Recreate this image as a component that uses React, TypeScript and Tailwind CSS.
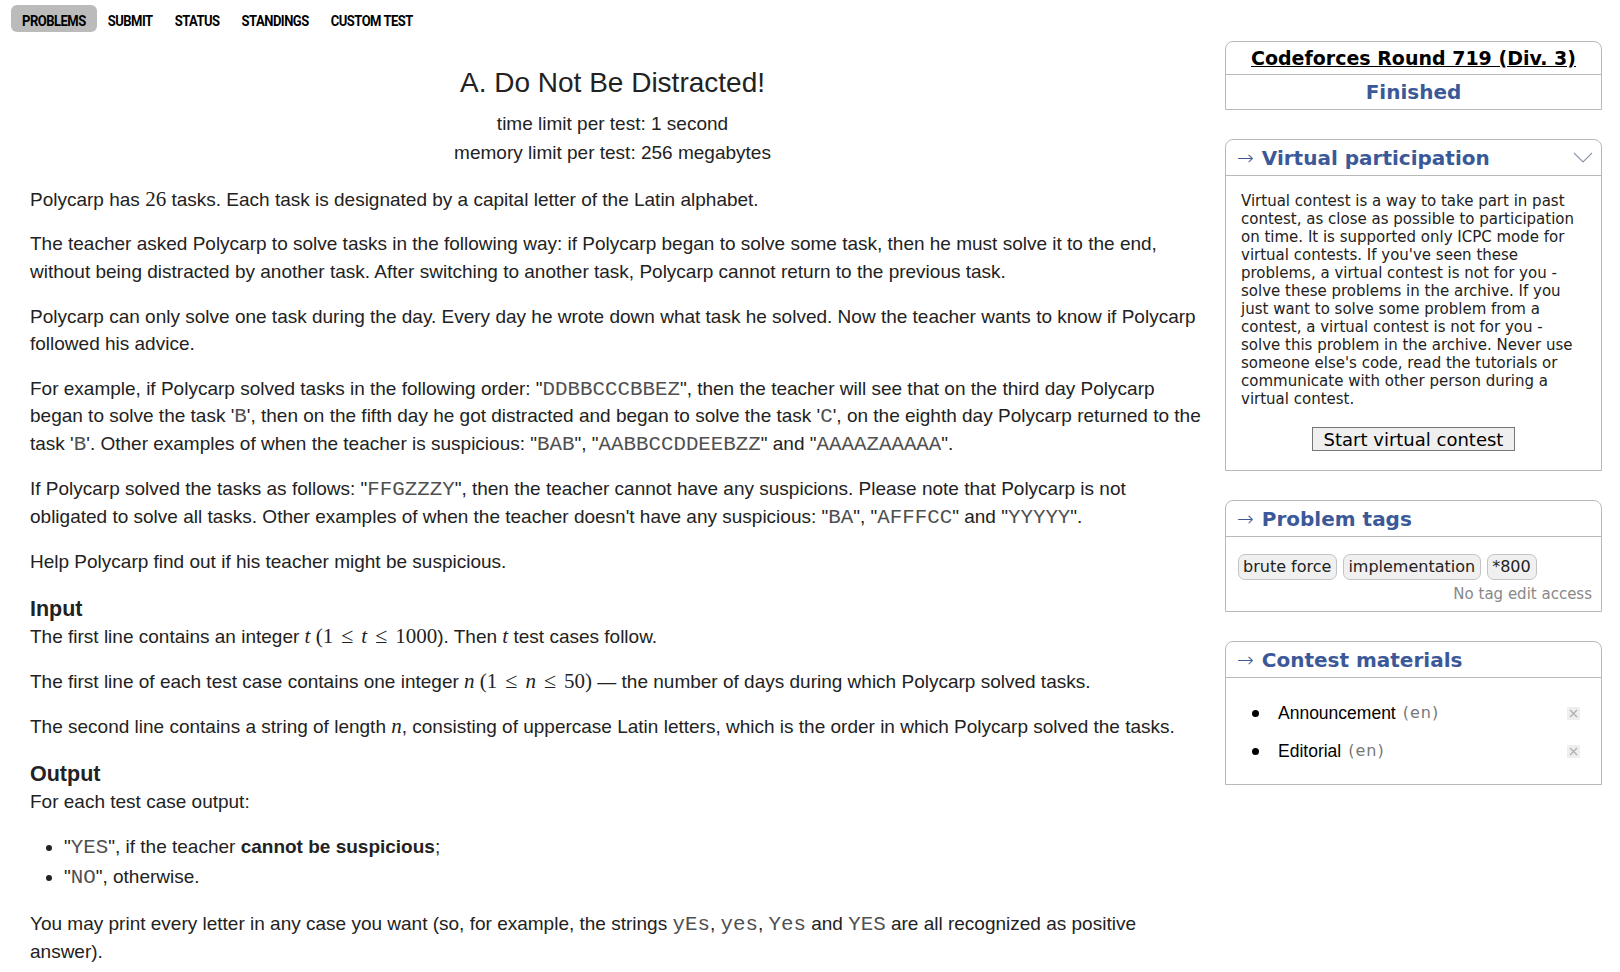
import React from "react";

const sans = { fontFamily: '"Liberation Sans", Arial, sans-serif' };
const serif = { fontFamily: '"Liberation Serif", "Times New Roman", serif' };

function M({ children, i }: { children: React.ReactNode; i?: boolean }) {
  return (
    <span className={"text-[21px] leading-none " + (i ? "italic" : "")} style={serif}>
      {children}
    </span>
  );
}

function Le() {
  return (
    <span className="text-[22px] leading-none mx-[8px]" style={serif}>
      ≤
    </span>
  );
}

function T({ children }: { children: React.ReactNode }) {
  return (
    <span
      className="text-[20.8px] leading-none text-[#505050]"
      style={{ fontFamily: '"Liberation Mono", "Courier New", monospace' }}
    >
      {children}
    </span>
  );
}

function BoxHeader({ title, chevron }: { title: string; chevron?: boolean }) {
  return (
    <div className="h-[36px] flex items-center border-b border-[#b9b9b9] pl-[11px] pr-[8px] text-[#3B5998]">
      <span className="text-[20px] font-extralight">→</span>
      <span className="text-[20px] font-bold ml-[8px]">{title}</span>
      {chevron && (
        <svg className="ml-auto" width="20" height="11" viewBox="0 0 20 11">
          <polyline points="1,1 10,10 19,1" fill="none" stroke="#8a96ad" strokeWidth="1.1" />
        </svg>
      )}
    </div>
  );
}

export default function App() {
  const menu = ["PROBLEMS", "SUBMIT", "STATUS", "STANDINGS", "CUSTOM TEST"];
  return (
    <div
      className="w-[1620px] h-[972px] bg-white overflow-hidden text-[#222]"
      style={{ fontFamily: '"DejaVu Sans", Verdana, sans-serif' }}
    >
      <div className="flex items-start h-[37px] pl-[11px] pt-[5px]">
        {menu.map((m, i) => (
          <div
            key={m}
            className={
              "h-[27px] px-[11px] pt-[4px] flex items-center rounded-[6px] text-[13px] font-bold text-black tracking-[-0.5px] " +
              (i === 0 ? "bg-[#bbbbbb]" : "")
            }
            style={{ fontFamily: 'Roboto, "Liberation Sans", sans-serif' }}
          >
            <span className="inline-block scale-y-[1.15]">{m}</span>
          </div>
        ))}
      </div>

      <div className="flex">
        <div className="w-[1225px] pl-[30px] pr-[20px] text-[19px] leading-[27.5px]" style={sans}>
          <div className="pr-[10px] text-center">
            <div className="mt-[29px] text-[28px] leading-[34px]">A. Do Not Be Distracted!</div>
            <div className="mt-[9px] leading-[29px]">time limit per test: 1 second</div>
            <div className="leading-[29px]">memory limit per test: 256 megabytes</div>
          </div>

          <p className="mt-[18.5px] mb-[17px]">
            Polycarp has <M>26</M> tasks. Each task is designated by a capital letter of the Latin alphabet.
          </p>
          <p className="mb-[17.5px]">
            The teacher asked Polycarp to solve tasks in the following way: if Polycarp began to solve some task, then
            he must solve it to the end, without being distracted by another task. After switching to another task,
            Polycarp cannot return to the previous task.
          </p>
          <p className="mb-[17px]">
            Polycarp can only solve one task during the day. Every day he wrote down what task he solved. Now the
            teacher wants to know if Polycarp followed his advice.
          </p>
          <p className="mb-[18px]">
            For example, if Polycarp solved tasks in the following order: "<T>DDBBCCCBBEZ</T>", then the teacher will
            see that on the third day Polycarp began to solve the task '<T>B</T>', then on the fifth day he got
            distracted and began to solve the task '<T>C</T>', on the eighth day Polycarp returned to the task '
            <T>B</T>'. Other examples of when the teacher is suspicious: "<T>BAB</T>", "<T>AABBCCDDEEBZZ</T>" and "
            <T>AAAAZAAAAA</T>".
          </p>
          <p className="mb-[18px]">
            If Polycarp solved the tasks as follows: "<T>FFGZZZY</T>", then the teacher cannot have any suspicions.
            Please note that Polycarp is not obligated to solve all tasks. Other examples of when the teacher doesn't
            have any suspicious: "<T>BA</T>", "<T>AFFFCC</T>" and "<T>YYYYY</T>".
          </p>
          <p className="mb-[20.5px]">Help Polycarp find out if his teacher might be suspicious.</p>

          <div className="text-[21.5px] font-bold leading-[27px]">Input</div>
          <p className="mb-[17px]">
            The first line contains an integer <M i>t</M> <M>(1</M>
            <Le />
            <M i>t</M>
            <Le />
            <M>1000</M>). Then <M i>t</M> test cases follow.
          </p>
          <p className="mb-[17.5px]">
            The first line of each test case contains one integer <M i>n</M> <M>(1</M>
            <Le />
            <M i>n</M>
            <Le />
            <M>50)</M> — the number of days during which Polycarp solved tasks.
          </p>
          <p className="mb-[20.5px]">
            The second line contains a string of length <M i>n</M>, consisting of uppercase Latin letters, which is
            the order in which Polycarp solved the tasks.
          </p>

          <div className="text-[21.5px] font-bold leading-[27px]">Output</div>
          <p className="mb-[17px]">For each test case output:</p>
          <ul className="list-disc pl-[34px] mb-[18px] leading-[30px]">
            <li>
              "<T>YES</T>", if the teacher <b>cannot be suspicious</b>;
            </li>
            <li>
              "<T>NO</T>", otherwise.
            </li>
          </ul>
          <p>
            You may print every letter in any case you want (so, for example, the strings <T>yEs</T>, <T>yes</T>,{" "}
            <T>Yes</T> and <T>YES</T> are all recognized as positive answer).
          </p>
        </div>

        <div className="w-[377px] mt-[4px]">
          <div className="border border-[#b9b9b9] rounded-t-[8px]">
            <div className="h-[33px] flex items-center justify-center border-b border-[#b9b9b9]">
              <span className="text-[19px] font-bold text-black underline">Codeforces Round 719 (Div. 3)</span>
            </div>
            <div className="h-[34px] flex items-center justify-center text-[#3B5998] font-bold text-[20px]">
              Finished
            </div>
          </div>

          <div className="mt-[29px] border border-[#b9b9b9] rounded-t-[8px]">
            <BoxHeader title="Virtual participation" chevron />
            <div className="px-[15px] pt-[16px] pb-[19px]">
              <div className="text-[15px] leading-[18px] text-[#222] whitespace-nowrap">
                Virtual contest is a way to take part in past
                <br />
                contest, as close as possible to participation
                <br />
                on time. It is supported only ICPC mode for
                <br />
                virtual contests. If you've seen these
                <br />
                problems, a virtual contest is not for you -
                <br />
                solve these problems in the archive. If you
                <br />
                just want to solve some problem from a
                <br />
                contest, a virtual contest is not for you -
                <br />
                solve this problem in the archive. Never use
                <br />
                someone else's code, read the tutorials or
                <br />
                communicate with other person during a
                <br />
                virtual contest.
              </div>
              <div className="flex justify-center mt-[19px]">
                <div className="h-[24px] w-[203px] flex items-center justify-center border border-[#767676] bg-[#efefef] text-[18px] text-black">
                  Start virtual contest
                </div>
              </div>
            </div>
          </div>

          <div className="mt-[29px] border border-[#b9b9b9] rounded-t-[8px]">
            <BoxHeader title="Problem tags" />
            <div className="pl-[12px] pr-[9px] pt-[17px] pb-[8px]">
              <div className="flex gap-[6px]">
                {["brute force", "implementation", "*800"].map((t) => (
                  <span
                    key={t}
                    className="h-[26px] flex items-center pl-[4px] pr-[5px] border border-[#c4c4c4] bg-[#f0f0f0] rounded-[7px] text-[16px] text-[#222]"
                  >
                    {t}
                  </span>
                ))}
              </div>
              <div className="text-right text-[15px] leading-[18px] mt-[5px] text-[#888]">No tag edit access</div>
            </div>
          </div>

          <div className="mt-[29px] border border-[#b9b9b9] rounded-t-[8px]">
            <BoxHeader title="Contest materials" />
            <ul className="pt-[16px] pb-[14px] pl-[26px] pr-[21px]">
              {["Announcement", "Editorial"].map((t) => (
                <li key={t} className="h-[38px] flex items-center">
                  <span className="w-[7px] h-[7px] rounded-full bg-black" />
                  <span className="ml-[19px] text-[17.5px] text-black" style={sans}>
                    {t}
                  </span>
                  <span className="ml-[7px] text-[16px] text-[#777] tracking-[1px]">(en)</span>
                  <span className="ml-auto w-[13px] h-[13px] bg-[#eeeeee] flex items-center justify-center">
                    <svg width="9" height="9" viewBox="0 0 9 9">
                      <path d="M1 1 L8 8 M8 1 L1 8" stroke="#b0b0b0" strokeWidth="1.4" />
                    </svg>
                  </span>
                </li>
              ))}
            </ul>
          </div>
        </div>
      </div>
    </div>
  );
}
